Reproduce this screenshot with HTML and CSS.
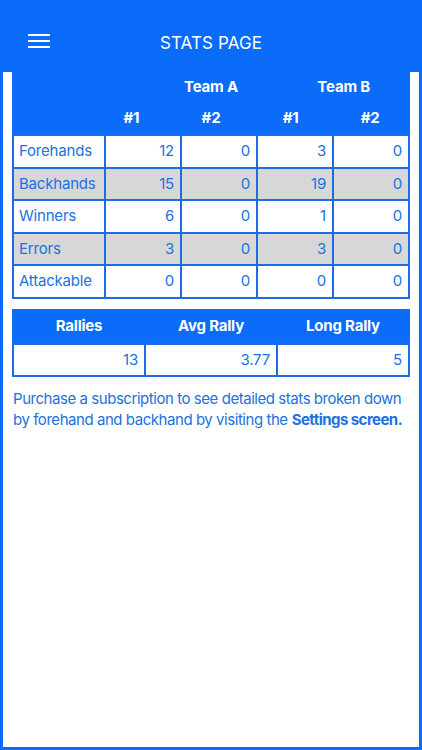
FILE: index.html
```html
<!DOCTYPE html>
<html>
<head>
<meta charset="utf-8">
<link rel="stylesheet" href="styles.css">
</head>
<body>
<div class="topbar">
  <svg class="menu" width="22" height="16" viewBox="0 0 22 16">
    <rect x="0" y="1" width="22" height="2" fill="#fff"/>
    <rect x="0" y="7" width="22" height="2" fill="#fff"/>
    <rect x="0" y="13" width="22" height="2" fill="#fff"/>
  </svg>
  <div class="title">STATS PAGE</div>
</div>
<div class="content">
  <div class="head">
    <div class="teams"><span></span><span>Team A</span><span>Team B</span></div>
    <div class="players"><span></span><span>#1</span><span>#2</span><span>#1</span><span>#2</span></div>
  </div>
  <div class="stats">
    <div class="c lbl">Forehands</div><div class="c">12</div><div class="c">0</div><div class="c">3</div><div class="c">0</div>
    <div class="c lbl g">Backhands</div><div class="c g">15</div><div class="c g">0</div><div class="c g">19</div><div class="c g">0</div>
    <div class="c lbl">Winners</div><div class="c">6</div><div class="c">0</div><div class="c">1</div><div class="c">0</div>
    <div class="c lbl g">Errors</div><div class="c g">3</div><div class="c g">0</div><div class="c g">3</div><div class="c g">0</div>
    <div class="c lbl">Attackable</div><div class="c">0</div><div class="c">0</div><div class="c">0</div><div class="c">0</div>
  </div>
  <div class="rally">
    <div class="rh">Rallies</div><div class="rh">Avg Rally</div><div class="rh">Long Rally</div>
    <div class="c">13</div><div class="c">3.77</div><div class="c">5</div>
  </div>
  <p class="note"><span>Purchase a subscription to see detailed stats broken down</span><br><span>by forehand and backhand by visiting the</span><b>Settings screen.</b></p>
</div>
</body>
</html>
```
FILE: styles.css
```css
html, body {
  margin: 0;
  padding: 0;
}
body {
  background: #0b6cfa;
  font-family: Inter, "Noto Sans", sans-serif;
  width: 422px;
  height: 750px;
  overflow: hidden;
}
.topbar {
  height: 72px;
  display: flex;
  align-items: center;
  justify-content: center;
  position: relative;
  color: #fff;
  padding-top: 14px;
  box-sizing: border-box;
}
.menu {
  position: absolute;
  left: 28px;
  top: 33px;
}
.title {
  font-size: 17px;
  letter-spacing: 0.1px;
}
.content {
  background: #fff;
  margin: 0 3px 0 3px;
  height: 675px;
  padding: 0 9px;
  box-sizing: border-box;
}
.head {
  background: #0b6cfa;
  color: #fff;
  font-weight: 700;
  font-size: 15px;
  letter-spacing: -0.2px;
}
.teams {
  display: grid;
  grid-template-columns: repeat(3, 1fr);
  height: 31px;
  align-items: center;
  text-align: center;
  padding-bottom: 2px;
  box-sizing: border-box;
}
.players {
  display: grid;
  grid-template-columns: repeat(5, 1fr);
  height: 31px;
  align-items: center;
  text-align: center;
  padding-bottom: 2px;
  box-sizing: border-box;
}
.stats {
  display: grid;
  grid-template-columns: 90px repeat(4, 1fr);
  grid-auto-rows: 30.5px;
  gap: 2px;
  background: #1a6de4;
  border: 2px solid #1a6de4;
}
.c {
  background: #fff;
  color: #2171e0;
  font-size: 15px;
  display: flex;
  align-items: center;
  justify-content: flex-end;
  padding: 0 6px;
  padding-bottom: 1px;
  letter-spacing: -0.2px;
}
.c.lbl {
  justify-content: flex-start;
  padding-left: 5px;
}
.c.g {
  background: #d7d7d7;
}
.rally {
  margin-top: 10px;
  display: grid;
  grid-template-columns: repeat(3, 1fr);
  grid-template-rows: 32px 30px;
  gap: 2px;
  background: #1a6de4;
  border: 2px solid #1a6de4;
}
.rh {
  background: #0b6cfa;
  color: #fff;
  font-weight: 700;
  font-size: 15px;
  letter-spacing: -0.2px;
  display: flex;
  align-items: center;
  justify-content: center;
  margin: -2px -1px 0 -1px;
  padding-top: 0;
}
.note {
  margin: 11px 0 0 1px;
  color: #2171e0;
  font-size: 15px;
  line-height: 21px;
  letter-spacing: -0.45px;
  white-space: nowrap;
}
.note b {
  font-weight: 700;
  letter-spacing: -0.55px;
  margin-left: 4px;
}
```
